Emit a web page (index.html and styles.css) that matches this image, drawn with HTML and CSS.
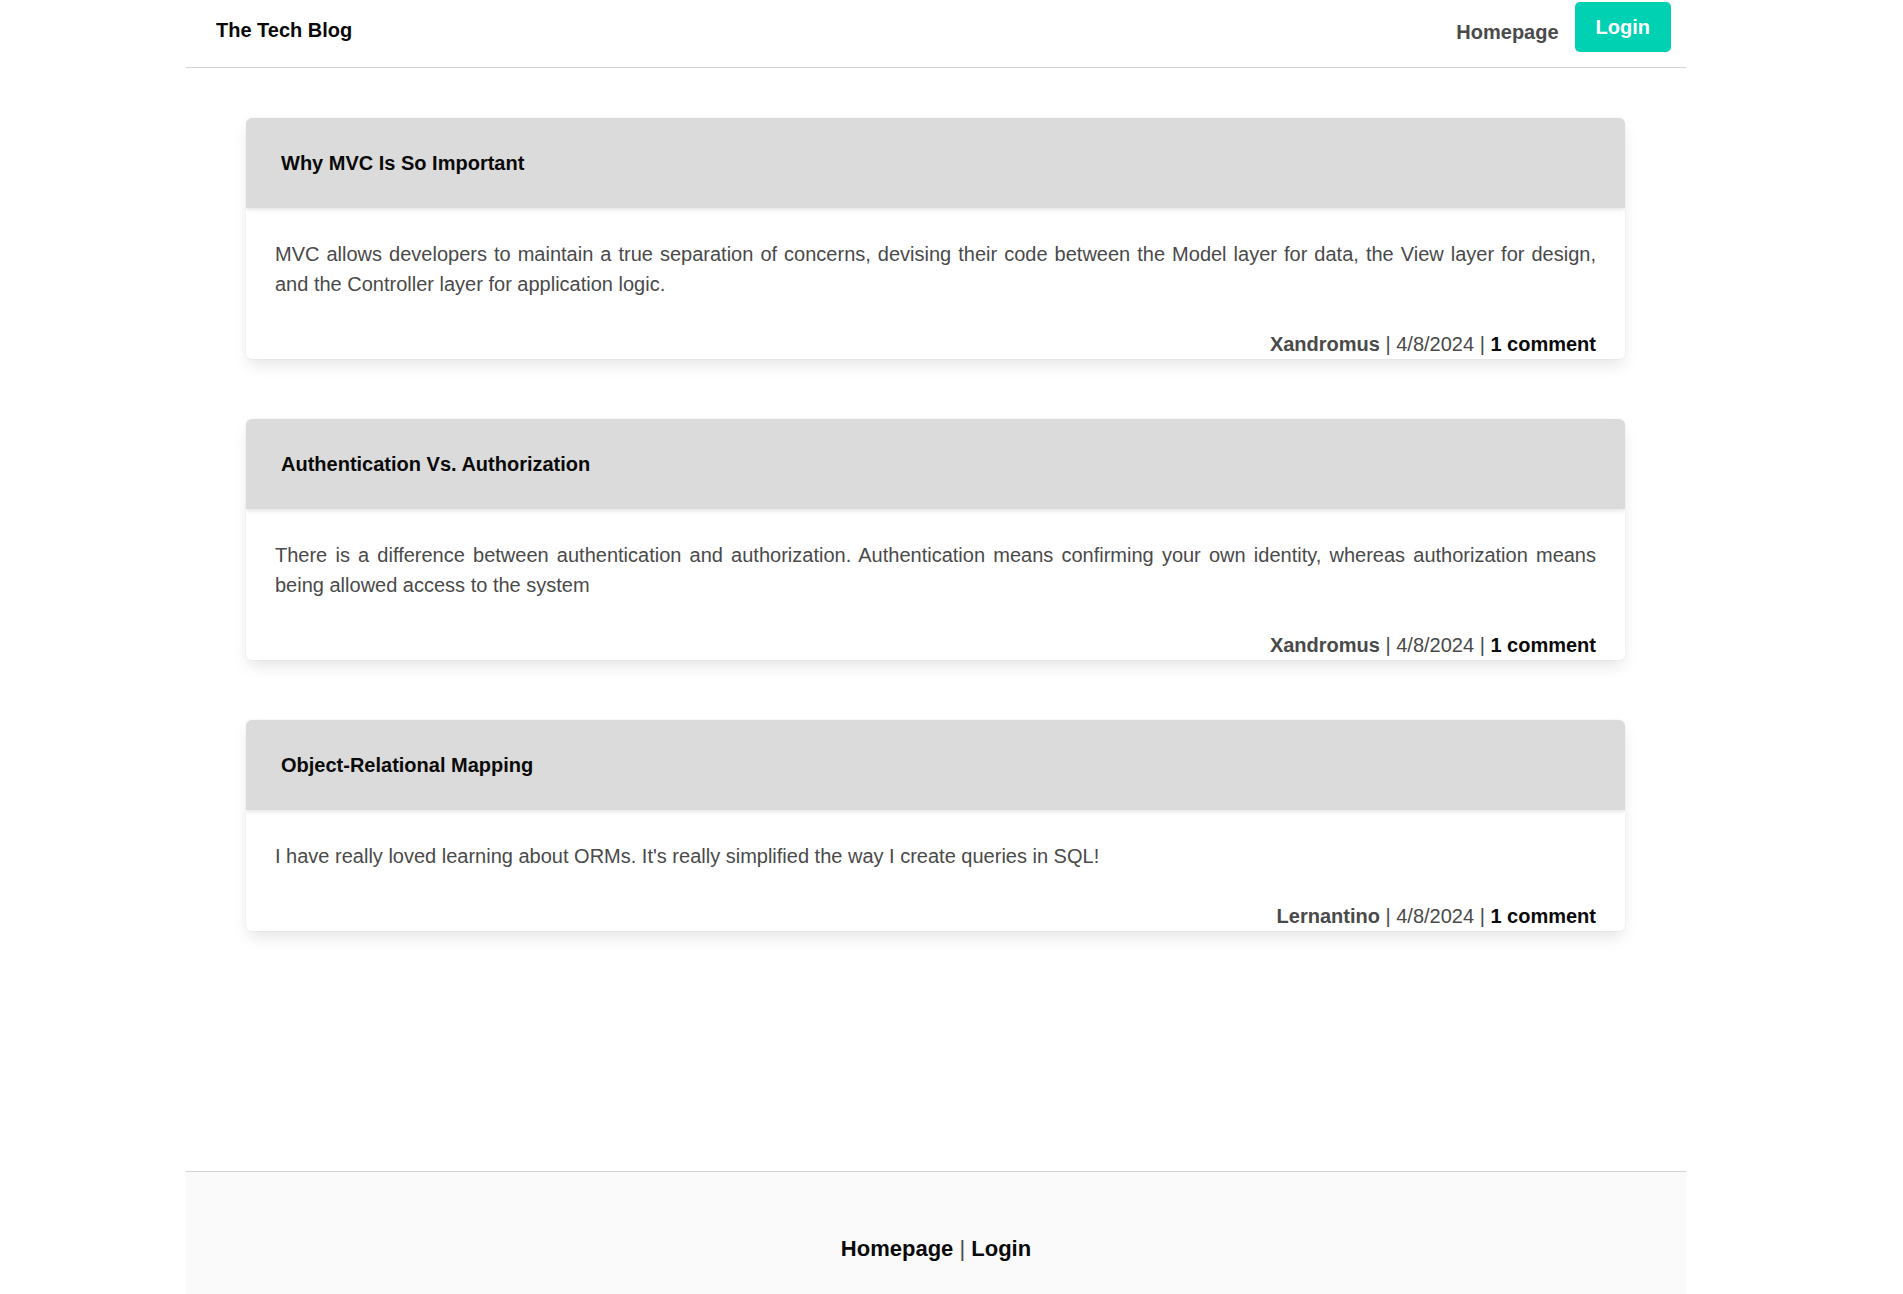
FILE: index.html
```html
<!DOCTYPE html>
<html lang="en">
<head>
<meta charset="utf-8">
<title>The Tech Blog</title>
<link rel="stylesheet" href="styles.css">
</head>
<body>
<div class="page">
  <header class="topbar">
    <a class="brand" href="#">The Tech Blog</a>
    <nav class="nav">
      <a class="nav-link" href="#">Homepage</a>
      <a class="btn-login" href="#">Login</a>
    </nav>
  </header>

  <main class="posts">
    <article class="card">
      <div class="card-header">Why MVC Is So Important</div>
      <div class="card-body">
        <p class="card-text">MVC allows developers to maintain a true separation of concerns, devising their code between the Model layer for data, the View layer for design, and the Controller layer for application logic.</p>
        <p class="meta"><b class="author">Xandromus</b> | 4/8/2024 | <b class="comments">1 comment</b></p>
      </div>
    </article>

    <article class="card">
      <div class="card-header">Authentication Vs. Authorization</div>
      <div class="card-body">
        <p class="card-text">There is a difference between authentication and authorization. Authentication means confirming your own identity, whereas authorization means being allowed access to the system</p>
        <p class="meta"><b class="author">Xandromus</b> | 4/8/2024 | <b class="comments">1 comment</b></p>
      </div>
    </article>

    <article class="card">
      <div class="card-header">Object-Relational Mapping</div>
      <div class="card-body">
        <p class="card-text">I have really loved learning about ORMs. It's really simplified the way I create queries in SQL!</p>
        <p class="meta"><b class="author">Lernantino</b> | 4/8/2024 | <b class="comments">1 comment</b></p>
      </div>
    </article>
  </main>

  <footer class="footer">
    <a class="foot-link" href="#">Homepage</a> | <a class="foot-link" href="#">Login</a>
  </footer>
</div>
</body>
</html>
```

FILE: styles.css
```css
html, body {
  margin: 0;
  padding: 0;
  background: #ffffff;
}

body {
  font-family: "Liberation Sans", Arial, sans-serif;
  color: #4a4a4a;
}

a {
  text-decoration: none;
}

.page {
  width: 1500px;
  margin-left: 186px;
  min-height: 100vh;
  display: flex;
  flex-direction: column;
}

.topbar {
  height: 67px;
  border-bottom: 1px solid #d3d3d3;
  display: flex;
  justify-content: space-between;
  align-items: flex-start;
  flex-shrink: 0;
}

.brand {
  margin-left: 30px;
  padding-top: 15px;
  font-size: 20px;
  line-height: 30px;
  font-weight: bold;
  color: #0a0a0a;
}

.nav {
  display: flex;
  align-items: flex-start;
  gap: 16px;
  margin-right: 15px;
}

.nav-link {
  padding-top: 17px;
  font-size: 20px;
  line-height: 30px;
  font-weight: bold;
  color: #4a4a4a;
}

.btn-login {
  margin-top: 2px;
  padding: 10px 21px 10px;
  font-size: 20px;
  line-height: 30px;
  font-weight: bold;
  color: #ffffff;
  background: #00d1b2;
  border-radius: 5px;
}

.posts {
  flex: 1;
  padding: 50px 61px 60px 60px;
}

.card {
  background: #ffffff;
  border-radius: 6px;
  box-shadow: 0 8px 16px -2px rgba(10, 10, 10, 0.1), 0 0 0 1px rgba(10, 10, 10, 0.02);
  margin-bottom: 60px;
  overflow: hidden;
}

.card-header {
  background: #dbdbdb;
  padding: 30px 34px 30px 35px;
  font-size: 20px;
  line-height: 30px;
  font-weight: bold;
  color: #0a0a0a;
  box-shadow: 0 2px 4px rgba(10, 10, 10, 0.1);
  position: relative;
}

.card-body {
  padding: 31px 29px 0 29px;
}

.card-text {
  margin: 0;
  font-size: 20px;
  line-height: 30px;
  text-align: justify;
  color: #4a4a4a;
}

.meta {
  margin: 30px 0 0;
  font-size: 20px;
  line-height: 30px;
  text-align: right;
  color: #4a4a4a;
}

.author {
  color: #4a4a4a;
}

.comments {
  color: #0a0a0a;
}

.footer {
  flex-shrink: 0;
  background: #fafafa;
  border-top: 1px solid #d3d3d3;
  padding: 60px 0 29px;
  font-size: 22px;
  line-height: 33px;
  text-align: center;
  color: #4a4a4a;
}

.foot-link {
  font-weight: bold;
  color: #0a0a0a;
}
```
